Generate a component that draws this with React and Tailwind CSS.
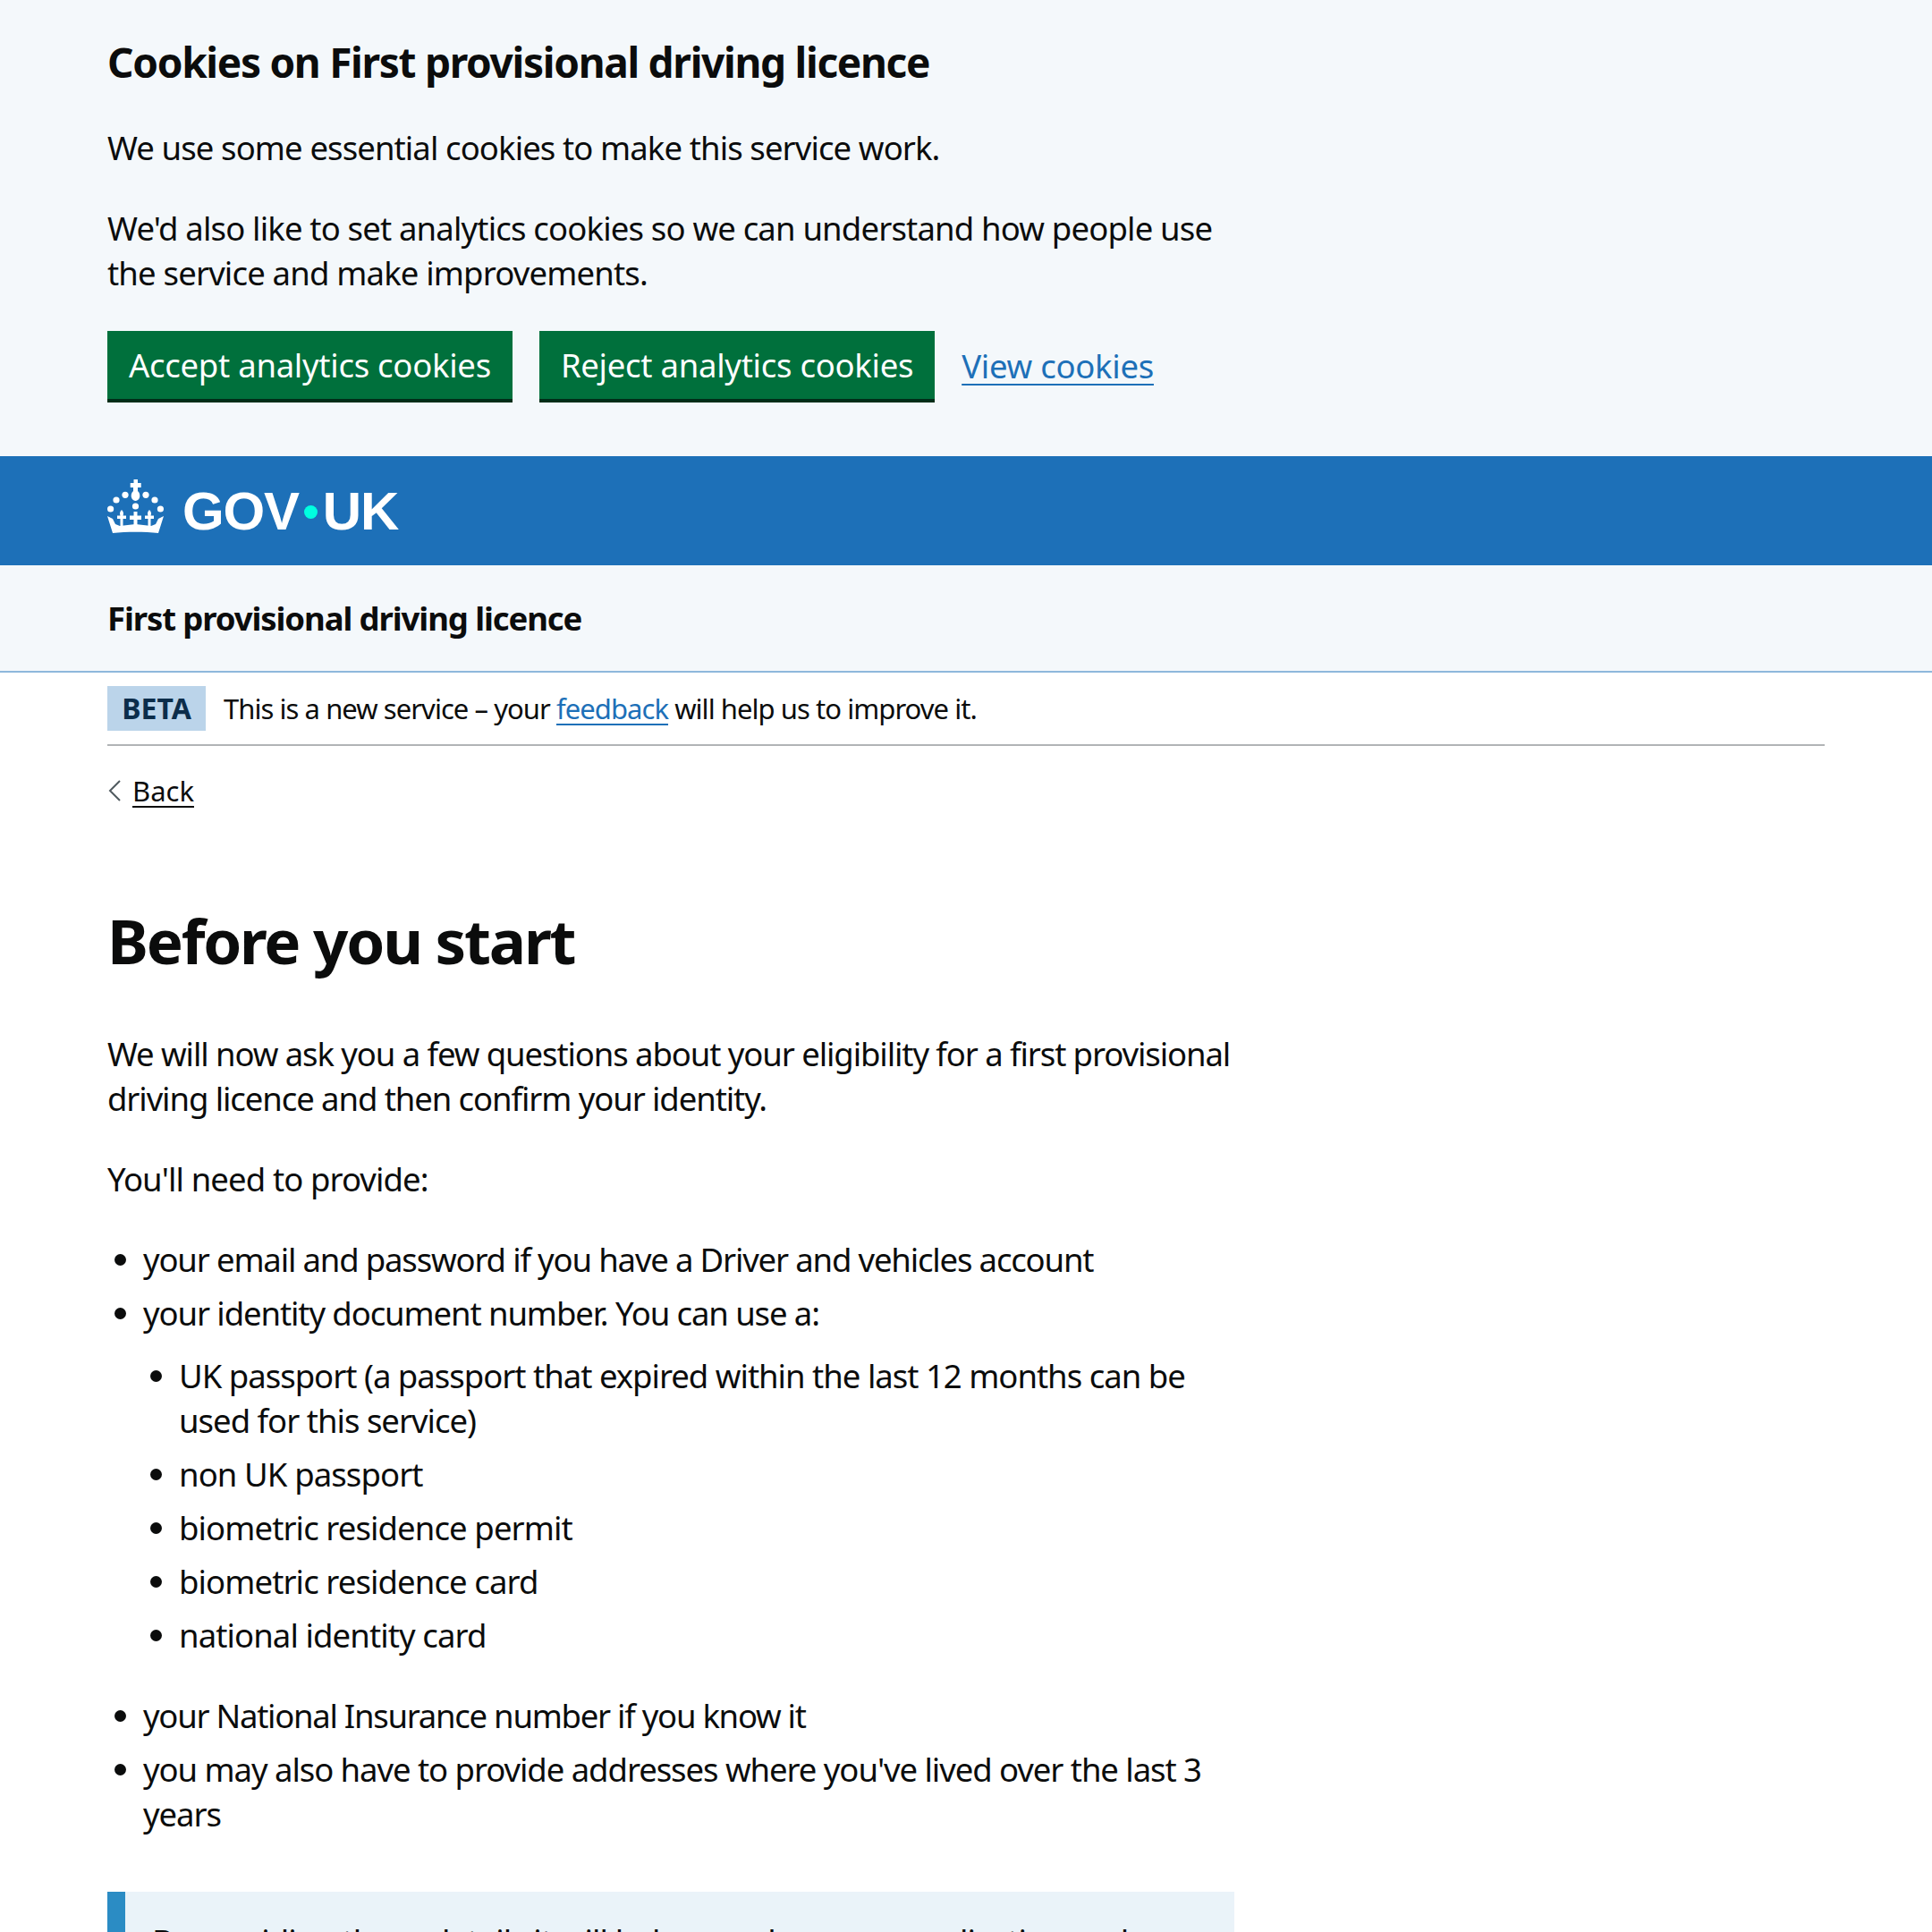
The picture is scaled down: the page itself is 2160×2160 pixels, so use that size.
const font = "font-['Noto_Sans',sans-serif]";

const Bullet = ({ children, className = '' }) => (
  <li className={`relative pl-[40px] mb-[10px] ${className}`}>
    <span className="absolute left-[8px] top-[19px] w-[13px] h-[13px] rounded-full bg-[#0b0c0c]" />
    {children}
  </li>
);

const Crown = () => (
  <svg viewBox="0 0 63 60" className="w-[63px] h-[60px] mb-[10px]" fill="#fff">
    <path d="M29.500 0h4.500v4h3.700v5H34v4c2.500 2 3 6 1.500 8.500-1 1.500-2.500 2.500-4 2.500s-3-1-4-2.500C26 19 26.500 15 29 13V9h-3.300V4h3.800z" />
    <circle cx="20" cy="17.300" r="3.600" />
    <circle cx="43" cy="17.300" r="3.600" />
    <circle cx="10" cy="23" r="3.600" />
    <circle cx="53" cy="23" r="3.600" />
    <circle cx="3.600" cy="33" r="3.600" />
    <circle cx="59.400" cy="33" r="3.600" />
    <circle cx="31.500" cy="30" r="3.600" />
    <path d="M29.500 36h4v4.500h4.500v4.500h-4.500v7h-4v-7H25v-4.500h4.500z" />
    <path d="M16 34c2 2 2.500 4 1.500 6.500H21v3.500h-3.500v8h-3v-8H11v-3.500h3.500C13.500 38 14 36 16 34z" />
    <path d="M47 34c2 2 2.500 4 1.500 6.500H52v3.500h-3.500v8h-3v-8H42v-3.500h3.500C44.500 38 45 36 47 34z" />
    <path d="M0 41l6 3 3 6 5 2 17.500-2 17.500 2 5-2 3-6 6-3-6 19c-15-1.700-36-1.700-51 0z" />
  </svg>
);

export default function App() {
  return (
    <div className={`${font} h-[2160px] overflow-hidden bg-white text-[#0b0c0c] text-[36.5px] leading-[50px] tracking-[-0.9px]`}>
      <section className="bg-[#f4f8fb] h-[510px] px-[120px] pt-[39px]">
        <div className="w-[1280px]">
          <h2 className="text-[46px] leading-[60px] font-bold tracking-[-1.3px] mb-[41px]">Cookies on First provisional driving licence</h2>
          <p className="mb-[40px]">We use some essential cookies to make this service work.</p>
          <p className="mb-[40px] tracking-[-0.83px]">We'd also like to set analytics cookies so we can understand how people use the service and make improvements.</p>
        </div>
        <div className="flex items-center gap-[30px] tracking-[-0.27px]">
          <button className="h-[80px] px-[24px] bg-[#00703c] text-white border-b-[4px] border-[#002d18]">Accept analytics cookies</button>
          <button className="h-[80px] px-[24px] bg-[#00703c] text-white border-b-[4px] border-[#002d18]">Reject analytics cookies</button>
          <a className="text-[#1d70b8] underline underline-offset-[6px] decoration-[2px] mb-[2px]">View cookies</a>
        </div>
      </section>

      <header className="bg-[#1d70b8] h-[122px] px-[120px] flex items-center gap-[21px]">
        <Crown />
        <span className="font-['Liberation_Sans',sans-serif] font-bold text-[60px] leading-none text-white tracking-[-1.2px] flex items-center mt-[2px]">
          GOV<span className="w-[15px] h-[15px] mx-[6px] rounded-full bg-[#00ffe0]" />UK
        </span>
      </header>

      <div className="bg-[#f4f8fb] h-[120px] px-[120px] flex items-center border-b-[2px] border-[#8eb8dc]">
        <span className="font-bold tracking-[-1.1px]">First provisional driving licence</span>
      </div>

      <main className="px-[120px]">
        <div className="flex items-center h-[82px] border-b-[2px] border-[#b1b4b6] text-[31px] leading-[40px] tracking-[-0.95px]">
          <strong className="w-[110px] h-[50px] bg-[#bbd4ea] text-[#0c2d4a] flex items-center justify-center text-[32px] font-bold mr-[20px] tracking-[0px]">BETA</strong>
          <span>This is a new service – your <a className="text-[#1d70b8] underline underline-offset-[5px] decoration-[2px]">feedback</a> will help us to improve it.</span>
        </div>

        <a className="flex items-center mt-[30px] text-[31px] leading-[40px] tracking-[0px] gap-[12px]">
          <svg viewBox="0 0 16 24" className="w-[16px] h-[24px]" fill="none" stroke="#505a5f" strokeWidth="2"><path d="M14 1 3 12l11 11" /></svg>
          <span className="underline underline-offset-[5px] decoration-[2px]">Back</span>
        </a>

        <div className="w-[1260px]">
          <h1 className="text-[69px] leading-[80px] font-bold tracking-[-2.2px] mt-[107px] mb-[62px]">Before you start</h1>
          <p className="mb-[40px] tracking-[-1.09px]">We will now ask you a few questions about your eligibility for a first provisional driving licence and then confirm your identity.</p>
          <p className="mb-[40px]">You'll need to provide:</p>
          <ul className="mb-[62px]">
            <Bullet className="tracking-[-1.17px]">your email and password if you have a Driver and vehicles account</Bullet>
            <Bullet>
              <span className="tracking-[-1.1px]">your identity document number. You can use a:</span>
              <ul className="mt-[20px] mb-[40px]">
                <Bullet className="tracking-[-1px]">UK passport (a passport that expired within the last 12 months can be used for this service)</Bullet>
                <Bullet>non UK passport</Bullet>
                <Bullet>biometric residence permit</Bullet>
                <Bullet>biometric residence card</Bullet>
                <Bullet>national identity card</Bullet>
              </ul>
            </Bullet>
            <Bullet className="tracking-[-1.27px]">your National Insurance number if you know it</Bullet>
            <Bullet className="tracking-[-1.06px]">you may also have to provide addresses where you've lived over the last 3 years</Bullet>
          </ul>
          <div className="border-l-[20px] border-[#2b8cc4] bg-[#eaf3f9] px-[30px] py-[30px]">
            By providing these details it will help speed up your application and
          </div>
        </div>
      </main>
    </div>
  );
}
